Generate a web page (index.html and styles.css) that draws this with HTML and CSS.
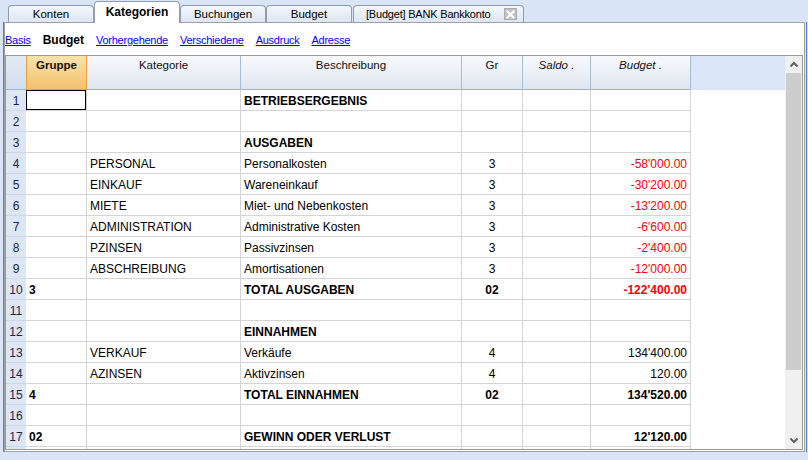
FILE: index.html
```html
<!DOCTYPE html>
<html>
<head>
<meta charset="utf-8">
<link rel="stylesheet" href="styles.css">
</head>
<body>
<div class="tabs">
  <div class="tab">Konten</div>
  <div class="tab active">Kategorien</div>
  <div class="tab">Buchungen</div>
  <div class="tab">Budget</div>
  <div class="tab bank"><span>[Budget] BANK Bankkonto</span><span class="close"><svg width="9" height="9" viewBox="0 0 9 9"><path d="M1.5 1.5 L7.5 7.5 M7.5 1.5 L1.5 7.5" stroke="#fff" stroke-width="2" stroke-linecap="square"/></svg></span></div>
</div>
<div class="frame">
  <div class="panel">
    <div class="subnav">
      <a class="lnk">Basis</a>
      <span class="cur">Budget</span>
      <a class="lnk">Vorhergehende</a>
      <a class="lnk">Verschiedene</a>
      <a class="lnk">Ausdruck</a>
      <a class="lnk">Adresse</a>
    </div>
    <div class="grid">
      <div class="sheet">
        <div class="row head">
          <div class="h hn"></div>
          <div class="h hg">Gruppe</div>
          <div class="h">Kategorie</div>
          <div class="h">Beschreibung</div>
          <div class="h">Gr</div>
          <div class="h it">Saldo .</div>
          <div class="h it">Budget .</div>
          <div class="h hf"></div>
        </div>
        <div class="row"><div class="n">1</div><div class="c sel"></div><div class="c"></div><div class="c b">BETRIEBSERGEBNIS</div><div class="c m"></div><div class="c"></div><div class="c r"></div><div class="f"></div></div>
        <div class="row"><div class="n">2</div><div class="c"></div><div class="c"></div><div class="c"></div><div class="c m"></div><div class="c"></div><div class="c r"></div><div class="f"></div></div>
        <div class="row"><div class="n">3</div><div class="c"></div><div class="c"></div><div class="c b">AUSGABEN</div><div class="c m"></div><div class="c"></div><div class="c r"></div><div class="f"></div></div>
        <div class="row"><div class="n">4</div><div class="c"></div><div class="c">PERSONAL</div><div class="c">Personalkosten</div><div class="c m">3</div><div class="c"></div><div class="c r neg">-58'000.00</div><div class="f"></div></div>
        <div class="row"><div class="n">5</div><div class="c"></div><div class="c">EINKAUF</div><div class="c">Wareneinkauf</div><div class="c m">3</div><div class="c"></div><div class="c r neg">-30'200.00</div><div class="f"></div></div>
        <div class="row"><div class="n">6</div><div class="c"></div><div class="c">MIETE</div><div class="c">Miet- und Nebenkosten</div><div class="c m">3</div><div class="c"></div><div class="c r neg">-13'200.00</div><div class="f"></div></div>
        <div class="row"><div class="n">7</div><div class="c"></div><div class="c">ADMINISTRATION</div><div class="c">Administrative Kosten</div><div class="c m">3</div><div class="c"></div><div class="c r neg">-6'600.00</div><div class="f"></div></div>
        <div class="row"><div class="n">8</div><div class="c"></div><div class="c">PZINSEN</div><div class="c">Passivzinsen</div><div class="c m">3</div><div class="c"></div><div class="c r neg">-2'400.00</div><div class="f"></div></div>
        <div class="row"><div class="n">9</div><div class="c"></div><div class="c">ABSCHREIBUNG</div><div class="c">Amortisationen</div><div class="c m">3</div><div class="c"></div><div class="c r neg">-12'000.00</div><div class="f"></div></div>
        <div class="row"><div class="n">10</div><div class="c b">3</div><div class="c"></div><div class="c b">TOTAL AUSGABEN</div><div class="c m b">02</div><div class="c"></div><div class="c r neg b">-122'400.00</div><div class="f"></div></div>
        <div class="row"><div class="n">11</div><div class="c"></div><div class="c"></div><div class="c"></div><div class="c m"></div><div class="c"></div><div class="c r"></div><div class="f"></div></div>
        <div class="row"><div class="n">12</div><div class="c"></div><div class="c"></div><div class="c b">EINNAHMEN</div><div class="c m"></div><div class="c"></div><div class="c r"></div><div class="f"></div></div>
        <div class="row"><div class="n">13</div><div class="c"></div><div class="c">VERKAUF</div><div class="c">Verkäufe</div><div class="c m">4</div><div class="c"></div><div class="c r">134'400.00</div><div class="f"></div></div>
        <div class="row"><div class="n">14</div><div class="c"></div><div class="c">AZINSEN</div><div class="c">Aktivzinsen</div><div class="c m">4</div><div class="c"></div><div class="c r">120.00</div><div class="f"></div></div>
        <div class="row"><div class="n">15</div><div class="c b">4</div><div class="c"></div><div class="c b">TOTAL EINNAHMEN</div><div class="c m b">02</div><div class="c"></div><div class="c r b">134'520.00</div><div class="f"></div></div>
        <div class="row"><div class="n">16</div><div class="c"></div><div class="c"></div><div class="c"></div><div class="c m"></div><div class="c"></div><div class="c r"></div><div class="f"></div></div>
        <div class="row"><div class="n">17</div><div class="c b">02</div><div class="c"></div><div class="c b">GEWINN ODER VERLUST</div><div class="c m"></div><div class="c"></div><div class="c r b">12'120.00</div><div class="f"></div></div>
        <div class="row"><div class="n"></div><div class="c"></div><div class="c"></div><div class="c"></div><div class="c m"></div><div class="c"></div><div class="c r"></div><div class="f"></div></div>
      </div>
      <div class="scroll">
        <div class="sbtn"><svg width="10" height="7" viewBox="0 0 10 7"><path d="M1.5 5.5 L5 2 L8.5 5.5" fill="none" stroke="#606060" stroke-width="2"/></svg></div>
        <div class="track"><div class="thumb"></div></div>
        <div class="sbtn"><svg width="10" height="7" viewBox="0 0 10 7"><path d="M1.5 1.5 L5 5 L8.5 1.5" fill="none" stroke="#606060" stroke-width="2"/></svg></div>
      </div>
    </div>
  </div>
</div>
</body>
</html>
```
FILE: styles.css
```css
html, body {
  margin: 0;
  padding: 0;
}
body {
  width: 808px;
  height: 460px;
  overflow: hidden;
  background: #d9e5f7;
  font-family: "Liberation Sans", Arial, sans-serif;
  color: #000;
}

/* ---------- tabs ---------- */
.tabs {
  display: flex;
  align-items: flex-end;
  height: 22px;
  padding-left: 8px;
  position: relative;
  z-index: 2;
}
.tab {
  box-sizing: border-box;
  width: 86px;
  height: 17px;
  border: 1px solid #8f9db3;
  border-bottom: none;
  border-radius: 4px 4px 0 0;
  background: linear-gradient(#f4f7fc, #dde6f3);
  font-size: 11.5px;
  display: flex;
  align-items: center;
  justify-content: center;
  white-space: nowrap;
}
.tab.active {
  height: 22px;
  margin-bottom: -1px;
  background: #fff;
  font-weight: bold;
  font-size: 12px;
  padding-bottom: 1px;
}
.tab.bank {
  width: 171px;
  margin-left: 1px;
  justify-content: flex-start;
  padding-left: 12px;
  gap: 14px;
  font-size: 11px;
  letter-spacing: -0.2px;
}
.close {
  box-sizing: border-box;
  width: 13px;
  height: 12px;
  background: #c3c3c3;
  border: 1px solid #a9a9a9;
  display: flex;
  align-items: center;
  justify-content: center;
}

/* ---------- frame & panel ---------- */
.frame {
  box-sizing: border-box;
  margin-left: 3px;
  width: 804px;
  height: 430px;
  border-left: 1px solid #3a8ae2;
  border-right: 1px solid #3a8ae2;
}
.panel {
  box-sizing: border-box;
  width: 801px;
  height: 430px;
  border: 1px solid #a0a0a0;
  background: #fff;
}
.subnav {
  height: 32px;
  display: flex;
  align-items: center;
  gap: 12px;
  font-size: 11px;
  letter-spacing: -0.25px;
  padding-top: 1px;
  box-sizing: border-box;
}
.lnk {
  color: #0000ff;
  text-decoration: underline;
}
.cur {
  font-weight: bold;
  letter-spacing: 0;
  font-size: 12px;
}

/* ---------- grid ---------- */
.grid {
  box-sizing: border-box;
  width: 798px;
  height: 395px;
  border: 1px solid #9a9a9a;
  display: flex;
}
.sheet {
  flex: 1;
  overflow: hidden;
}
.row {
  display: grid;
  grid-template-columns: 20px 61px 154px 221px 61px 68px 100px 1fr;
  height: 21px;
  font-size: 12px;
}
.row.head {
  height: 34px;
  font-size: 11.5px;
}
.h {
  box-sizing: border-box;
  background: linear-gradient(#f8fafd, #dfe5ee);
  border-right: 1px solid #a7bbd5;
  border-bottom: 1px solid #9fb3cf;
  text-align: center;
  padding-top: 3px;
  color: #111;
}
.h.hn {
  background: linear-gradient(#e3eaf4, #d2ddec);
  border-right: none;
}
.h.hg {
  background: linear-gradient(#fae2ad, #f2c26c);
  border: 1px solid #f0a03c;
  border-top: none;
  font-weight: bold;
}
.h.it {
  font-style: italic;
}
.h.hf {
  background: #dae6f8;
  border: none;
}
.n {
  box-sizing: border-box;
  background: #dde6f3;
  border-bottom: 1px solid #cdd8e8;
  color: #1e1e50;
  text-align: center;
  padding-top: 2px;
  line-height: 18px;
}
.c {
  box-sizing: border-box;
  border-right: 1px solid #d4d4d4;
  border-bottom: 1px solid #d4d4d4;
  padding: 2px 3px 0 3px;
  line-height: 18px;
  white-space: nowrap;
  overflow: hidden;
}
.c.m {
  text-align: center;
}
.c.r {
  text-align: right;
}
.c.b {
  font-weight: bold;
}
.c.neg {
  color: #ff0000;
}
.c.sel {
  box-shadow: inset 0 0 0 1px #000;
}
.f {
  background: #fff;
}

/* ---------- scrollbar ---------- */
.scroll {
  width: 17px;
  background: #f0f0f0;
  display: flex;
  flex-direction: column;
}
.sbtn {
  height: 17px;
  display: flex;
  align-items: center;
  justify-content: center;
}
.track {
  flex: 1;
  padding: 0 1px 0 1px;
}
.thumb {
  height: 297px;
  background: #cdcdcd;
}
```
